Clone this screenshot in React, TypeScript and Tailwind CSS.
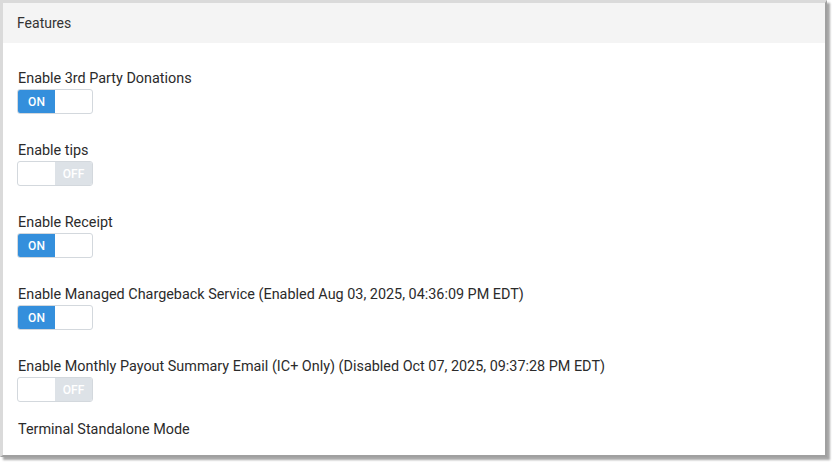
import React from 'react';

type Feature = { label: string; on: boolean };

const features: Feature[] = [
  { label: 'Enable 3rd Party Donations', on: true },
  { label: 'Enable tips', on: false },
  { label: 'Enable Receipt', on: true },
  { label: 'Enable Managed Chargeback Service (Enabled Aug 03, 2025, 04:36:09 PM EDT)', on: true },
  { label: 'Enable Monthly Payout Summary Email (IC+ Only) (Disabled Oct 07, 2025, 09:37:28 PM EDT)', on: false },
];

const Toggle: React.FC<{ on: boolean }> = ({ on }) => (
  <div className="-ml-[1px] flex h-[25px] w-[76px] overflow-hidden rounded-[3px] border border-[#d3d8dd] bg-white text-[12px] font-medium text-white">
    {on ? (
      <>
        <div className="flex w-[37px] items-center justify-center bg-[#348fdc]">ON</div>
        <div className="flex-1" />
      </>
    ) : (
      <>
        <div className="w-[37px]" />
        <div className="flex flex-1 items-center justify-center bg-[#dde2e7]">OFF</div>
      </>
    )}
  </div>
);

export default function App() {
  return (
    <div className="h-[465px] w-[836px] bg-white" style={{ fontFamily: 'Roboto, "Liberation Sans", sans-serif' }}>
      <div className="h-[457px] w-[827px] border-l-[3px] border-t-[3px] border-r-2 border-b-2 border-l-[#dadada] border-t-[#dadada] border-r-[#a0a0a0] border-b-[#a0a0a0] bg-white shadow-[3px_3px_2px_rgba(0,0,0,0.35)]">
        <div className="flex h-[40px] items-center bg-[#f4f4f4] px-[14px] text-[14px] text-[#333]">Features</div>
        <div className="px-[15px] pt-[26px] text-[14.4px] text-[#2b2b2b]">
          {features.map((f) => (
            <div key={f.label} className="mb-[27px]">
              <div className="h-[20px] leading-[20px]">{f.label}</div>
              <Toggle on={f.on} />
            </div>
          ))}
          <div className="-mt-[9px] h-[20px] leading-[20px]">Terminal Standalone Mode</div>
        </div>
      </div>
    </div>
  );
}
